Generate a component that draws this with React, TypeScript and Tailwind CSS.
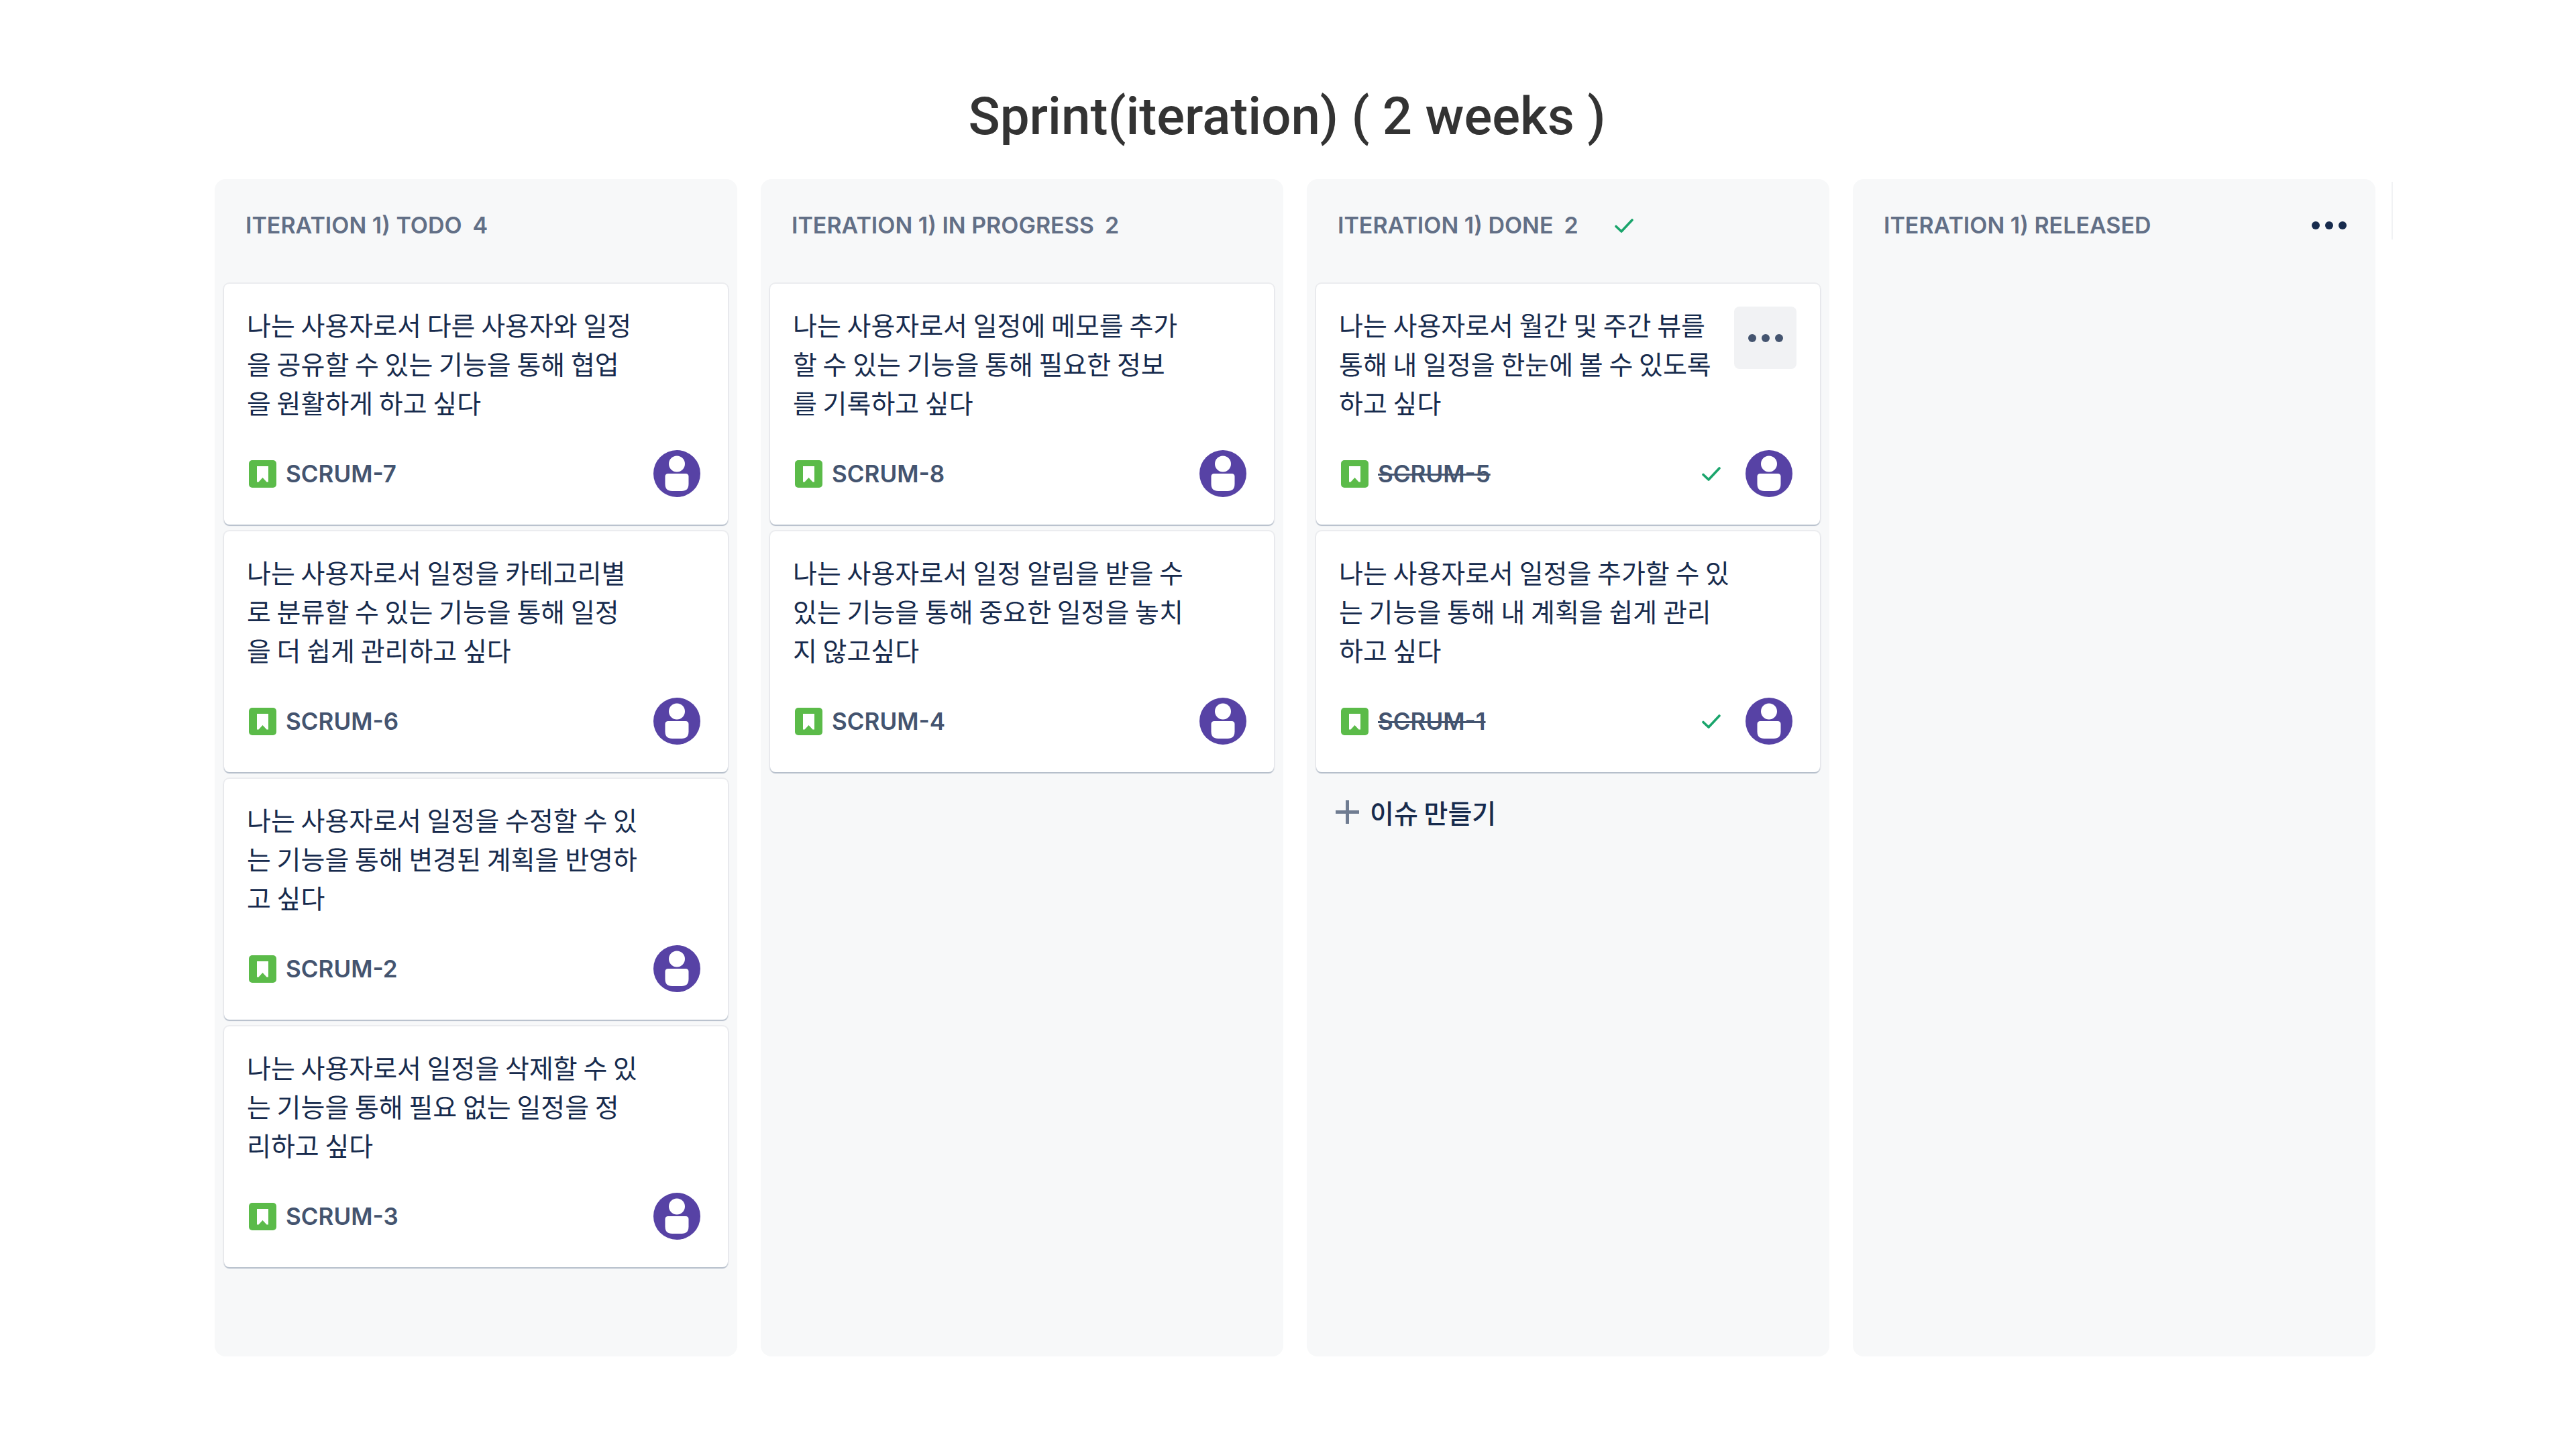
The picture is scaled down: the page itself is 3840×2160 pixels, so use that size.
import React from 'react';

type Issue = {
  key: string;
  summary: string;
  done?: boolean;
  menu?: boolean;
};

type Column = {
  name: string;
  count?: number;
  done?: boolean;
  menu?: boolean;
  create?: boolean;
  issues: Issue[];
};

const columns: Column[] = [
  {
    name: 'ITERATION 1) TODO',
    count: 4,
    issues: [
      { key: 'SCRUM-7', summary: '나는 사용자로서 다른 사용자와 일정을 공유할 수 있는 기능을 통해 협업을 원활하게 하고 싶다' },
      { key: 'SCRUM-6', summary: '나는 사용자로서 일정을 카테고리별로 분류할 수 있는 기능을 통해 일정을 더 쉽게 관리하고 싶다' },
      { key: 'SCRUM-2', summary: '나는 사용자로서 일정을 수정할 수 있는 기능을 통해 변경된 계획을 반영하고 싶다' },
      { key: 'SCRUM-3', summary: '나는 사용자로서 일정을 삭제할 수 있는 기능을 통해 필요 없는 일정을 정리하고 싶다' },
    ],
  },
  {
    name: 'ITERATION 1) IN PROGRESS',
    count: 2,
    issues: [
      { key: 'SCRUM-8', summary: '나는 사용자로서 일정에 메모를 추가할 수 있는 기능을 통해 필요한 정보를 기록하고 싶다' },
      { key: 'SCRUM-4', summary: '나는 사용자로서 일정 알림을 받을 수 있는 기능을 통해 중요한 일정을 놓치지 않고싶다' },
    ],
  },
  {
    name: 'ITERATION 1) DONE',
    count: 2,
    done: true,
    create: true,
    issues: [
      { key: 'SCRUM-5', summary: '나는 사용자로서 월간 및 주간 뷰를 통해 내 일정을 한눈에 볼 수 있도록 하고 싶다', done: true, menu: true },
      { key: 'SCRUM-1', summary: '나는 사용자로서 일정을 추가할 수 있는 기능을 통해 내 계획을 쉽게 관리하고 싶다', done: true },
    ],
  },
  { name: 'ITERATION 1) RELEASED', menu: true, issues: [] },
];

function StoryIcon() {
  return (
    <svg width="41" height="41" viewBox="0 0 41 41" className="shrink-0" aria-hidden="true">
      <rect width="41" height="41" rx="5" fill="#5bbb49" />
      <path d="M12 9h17v23.500h-2.500L20.500 26 14.500 32.500H12z" fill="#fff" />
    </svg>
  );
}

function CheckIcon() {
  return (
    <svg width="28" height="22" viewBox="0 0 28 22" fill="none" className="shrink-0" aria-hidden="true">
      <path d="M2 12.500l8 7.500L26 3" stroke="#1aa56c" strokeWidth="3.600" strokeLinecap="round" strokeLinejoin="round" />
    </svg>
  );
}

function DotsIcon() {
  return (
    <svg width="54" height="12" viewBox="0 0 54 12" fill="currentColor" aria-hidden="true">
      <circle cx="7" cy="6" r="6" />
      <circle cx="27" cy="6" r="6" />
      <circle cx="47" cy="6" r="6" />
    </svg>
  );
}

function Avatar() {
  return (
    <svg width="70" height="70" viewBox="0 0 70 70" className="shrink-0" aria-hidden="true">
      <circle cx="35" cy="35" r="35" fill="#5742a5" />
      <circle cx="35" cy="20.500" r="12" fill="#fff" />
      <path d="M22 35h26q4.500 0 4.500 4.500v11q0 10.500-10.500 10.500h-14q-10.500 0-10.500-10.500v-11q0-4.500 4.500-4.500z" fill="#fff" />
    </svg>
  );
}

function IssueCard({ issue }: { issue: Issue }) {
  return (
    <li className="rounded-lg bg-white pt-[34px] pr-[35px] pb-[41px] pl-[34px] shadow-[0_2px_1px_#b6bfcb,0_0_0_2px_#ebecef]">
      <div className="flex gap-1">
        <p className="-mt-[3px] min-w-0 flex-1 font-['Noto_Sans_CJK_KR',sans-serif] text-[39px] leading-[58px] text-[#172b4d]">
          {issue.summary}
        </p>
        <div className="w-[93px] shrink-0">
          {issue.menu && (
            <button
              type="button"
              aria-label={`${issue.key} actions`}
              className="flex h-[93px] w-full items-center justify-center rounded-lg bg-[#f1f2f4] text-[#44546f]"
            >
              <DotsIcon />
            </button>
          )}
        </div>
      </div>
      <div className="mt-[43px] flex items-center pl-[3px] pr-[6px]">
        <StoryIcon />
        <a
          href={`#${issue.key}`}
          className={`ml-[14px] text-[35px] leading-[40px] font-semibold text-[#44546f] ${issue.done ? 'line-through decoration-[3px]' : ''}`}
        >
          {issue.key}
        </a>
        <div className="ml-auto flex items-center gap-[37px]">
          {issue.done && <CheckIcon />}
          <Avatar />
        </div>
      </div>
    </li>
  );
}

function BoardColumn({ column }: { column: Column }) {
  return (
    <section className="flex min-w-0 flex-1 flex-col rounded-2xl bg-[#f7f8f9] px-[14px]">
      <header className="mt-[22px] mb-[41px] flex h-[93px] items-center pr-[9px] pl-[32px]">
        <h2 className="flex gap-4 text-[34px] leading-[40px] font-semibold text-[#626f86]">
          <span>{column.name}</span>
          {column.count && <span>{column.count}</span>}
        </h2>
        {column.done && (
          <span className="ml-[54px]">
            <CheckIcon />
          </span>
        )}
        {column.menu && (
          <button
            type="button"
            aria-label="Column actions"
            className="ml-auto flex h-[93px] w-[93px] items-center justify-center text-[#172b4d]"
          >
            <DotsIcon />
          </button>
        )}
      </header>
      <ul className="flex flex-col gap-[10px]">
        {column.issues.map(issue => (
          <IssueCard key={issue.key} issue={issue} />
        ))}
      </ul>
      {column.create && (
        <button
          type="button"
          className="mt-[30px] flex items-center gap-4 self-start pl-[29px] font-['Noto_Sans_CJK_KR',sans-serif] text-[39px] leading-[58px] font-medium text-[#172b4d]"
        >
          <svg width="35" height="35" viewBox="0 0 35 35" aria-hidden="true">
            <path d="M17.500 0v35M0 17.500h35" stroke="#6f7c91" strokeWidth="5" />
          </svg>
          이슈 만들기
        </button>
      )}
    </section>
  );
}

export default function App() {
  return (
    <main className="flex min-h-screen flex-col bg-white pt-[126px] pr-[273px] pb-[138px] pl-[320px] font-[Inter,'Noto_Sans_CJK_KR',sans-serif]">
      <h1 className="pr-[50px] text-center font-[Roboto,sans-serif] text-[78px] leading-[96px] font-medium text-[#333]">
        Sprint(iteration) ( 2 weeks )
      </h1>
      <div className="mt-[45px] flex flex-1 gap-6">
        <div className="flex min-w-0 flex-1 gap-[35px]">
          {columns.map(column => (
            <BoardColumn key={column.name} column={column} />
          ))}
        </div>
        <div className="mt-1 h-[86px] w-[2px] bg-[#f1f2f4]" />
      </div>
    </main>
  );
}
